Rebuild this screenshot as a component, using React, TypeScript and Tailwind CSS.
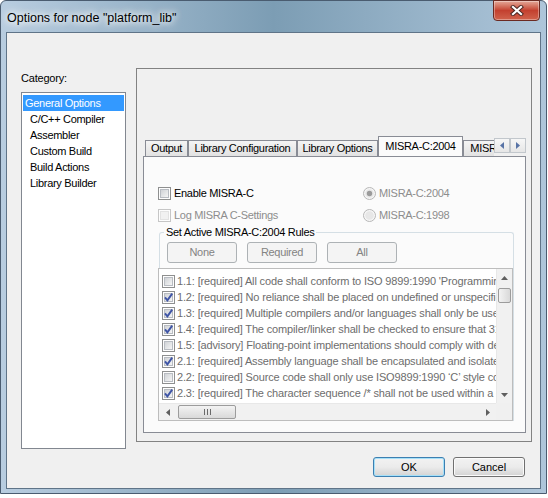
import React from "react";

const categories = ["General Options", "C/C++ Compiler", "Assembler", "Custom Build", "Build Actions", "Library Builder"];

const tabs = [
  { label: "Output", w: "w-[43px]" },
  { label: "Library Configuration", w: "w-[109px]" },
  { label: "Library Options", w: "w-[81px]" },
  { label: "MISRA-C:2004", w: "w-[85px]", active: true },
  { label: "MISRA-C:1998", w: "w-[85px]" },
];

const rules = [
  { on: false, text: "1.1: [required] All code shall conform to ISO 9899:1990 'Programming languages - C'" },
  { on: true, text: "1.2: [required] No reliance shall be placed on undefined or unspecified behaviour" },
  { on: true, text: "1.3: [required] Multiple compilers and/or languages shall only be used if there is a common interface" },
  { on: true, text: "1.4: [required] The compiler/linker shall be checked to ensure that 31 character significance" },
  { on: false, text: "1.5: [advisory] Floating-point implementations should comply with defined floating-point standard" },
  { on: true, text: "2.1: [required] Assembly language shall be encapsulated and isolated" },
  { on: false, text: "2.2: [required] Source code shall only use ISO9899:1990 ‘C’ style comments" },
  { on: true, text: "2.3: [required] The character sequence /* shall not be used within a comment" },
  { on: false, text: "2.4: [advisory] Sections of code should not be \"commented out\"" },
];

function CheckBox({ checked = false, disabled = false }: { checked?: boolean; disabled?: boolean }) {
  return (
    <svg width="13" height="13" viewBox="0 0 13 13" className="shrink-0">
      <defs>
        <linearGradient id="cbfill" x1="0" y1="0" x2="1" y2="1">
          <stop offset="0" stopColor="#cdd0d4" />
          <stop offset="1" stopColor="#f7f7f7" />
        </linearGradient>
      </defs>
      <rect x="0.5" y="0.5" width="12" height="12" fill="#fdfdfd" stroke={disabled ? "#c6c6c6" : "#8e8f8f"} />
      <rect x="2.5" y="2.5" width="8" height="8" fill={disabled ? "#f1f1f1" : "url(#cbfill)"} stroke={disabled ? "#e2e2e2" : "#b8bcc2"} />
      {checked && <path d="M3 6.3 L5.4 9.4 L10.2 2.6" fill="none" stroke="#3f55a6" strokeWidth="1.9" />}
    </svg>
  );
}

function Radio({ selected = false }: { selected?: boolean }) {
  return (
    <svg width="13" height="13" viewBox="0 0 13 13" className="shrink-0">
      <circle cx="6.5" cy="6.5" r="6" fill="#f6f6f6" stroke="#b7b7b7" />
      <circle cx="6.5" cy="6.5" r="4.3" fill="#e7e7e7" />
      {selected && <circle cx="6.5" cy="6.5" r="2.7" fill="#9b9b9b" />}
    </svg>
  );
}

function Arrow({ dir, color = "#5f5f5f" }: { dir: "up" | "down" | "left" | "right"; color?: string }) {
  const d = {
    up: "M0 4 L3.5 0 L7 4 Z",
    down: "M0 0 L7 0 L3.5 4 Z",
    left: "M4 0 L4 7 L0 3.5 Z",
    right: "M0 0 L4 3.5 L0 7 Z",
  }[dir];
  const vertical = dir === "up" || dir === "down";
  return (
    <svg width={vertical ? 7 : 4} height={vertical ? 4 : 7} viewBox={vertical ? "0 0 7 4" : "0 0 4 7"}>
      <path d={d} fill={color} />
    </svg>
  );
}

function WinButton({ children, focused = false, disabled = false, className = "" }: { children: React.ReactNode; focused?: boolean; disabled?: boolean; className?: string }) {
  if (disabled) {
    return (
      <div className={`flex items-center justify-center rounded-[3px] border border-[#adb2b5] bg-[#f4f4f4] text-[#838383] ${className}`}>
        {children}
      </div>
    );
  }
  return (
    <div
      className={`flex items-center justify-center rounded-[3px] border ${focused ? "border-[#3c7fb1] shadow-[inset_0_0_0_1px_#a6e0f8]" : "border-[#707070] shadow-[inset_0_0_0_1px_#fbfbfb]"} bg-linear-to-b from-[#f2f2f2] via-[#ebebeb] to-[#d3d3d3] text-black ${className}`}
    >
      {children}
    </div>
  );
}

export default function App() {
  return (
    <div className="w-[548px] h-[498px] bg-white font-['Liberation_Sans',Arial,sans-serif] text-[11px] text-black select-none">
      <div className="w-[547px] h-[494px] rounded-t-[6px] border border-[#4a5c70] bg-linear-to-r from-[#b8cde0] via-[#7c9db4] to-[#aec6da] flex flex-col">
        {/* title bar */}
        <div className="h-[31px] flex items-start justify-between">
          <div className="pl-[6px] pt-[10px] text-[12.5px] leading-[15px] [text-shadow:0_0_6px_#fff,0_0_10px_#fff,0_0_14px_#fff]">
            Options for node "platform_lib"
          </div>
          <div className="-mt-px mr-[6px] w-[47px] h-[21px] rounded-b-[4px] border border-[#6b2a22] bg-linear-to-b from-[#e3a899] via-[#c3402f] to-[#d0624c] flex items-center justify-center shadow-[inset_0_0_0_1px_rgba(255,255,255,0.35)]">
            <svg width="14" height="11" viewBox="0 0 14 11">
              <path d="M3 2 L11 9 M11 2 L3 9" stroke="#4e2a25" strokeWidth="4.2" strokeLinecap="square" />
              <path d="M3 2 L11 9 M11 2 L3 9" stroke="#ffffff" strokeWidth="2.2" strokeLinecap="square" />
            </svg>
          </div>
        </div>

        {/* client area */}
        <div className="flex-1 mx-[5px] mb-[4px] border border-[#5f7488] bg-[#f0f0f0] flex flex-col">
          <div className="flex items-start pt-[35px] pl-[14px]">
            <div className="w-[105px] flex flex-col">
              <div className="pt-[4px] mb-[7px] leading-[13px] tracking-[-0.2px]">Category:</div>
              <div className="h-[357px] border border-[#828790] bg-white pt-[2px] px-[1px] tracking-[-0.3px]">
                {categories.map((c, i) => (
                  <div key={c} className={`h-[16px] flex items-center ${i === 0 ? "bg-[#3399ff] text-white pl-[2px]" : "pl-[7px]"}`}>
                    {c}
                  </div>
                ))}
              </div>
            </div>

            {/* right panel */}
            <div className="ml-[10px] w-[396px] h-[374px] border border-[#828282] pl-[6px] pt-[67px]">
              <div className="w-[383px]">
                {/* tab header */}
                <div className="h-[20px] flex items-start">
                  <div className="w-[352px] h-[20px] overflow-hidden flex items-end pl-[2px]">
                    {tabs.map((t) =>
                      t.active ? (
                        <div
                          key={t.label}
                          className={`${t.w} shrink-0 h-[21px] -mb-px relative z-10 border border-b-0 border-[#898c95] bg-[#fbfbfb] flex items-start justify-center pt-[3px] leading-[13px] tracking-[-0.3px]`}
                        >
                          {t.label}
                        </div>
                      ) : (
                        <div
                          key={t.label}
                          className={`${t.w} shrink-0 h-[16px] border border-b-0 border-[#898c95] bg-linear-to-b from-[#f4f4f4] to-[#e2e2e2] flex items-center justify-center leading-[13px] tracking-[-0.3px] whitespace-nowrap`}
                        >
                          {t.label}
                        </div>
                      )
                    )}
                  </div>
                  <div className="mt-[2px] flex">
                    <div className="w-[16px] h-[15px] border border-[#c2c7cc] bg-linear-to-b from-[#f7f7f7] to-[#e6e6e6] flex items-center justify-center">
                      <Arrow dir="left" color="#5873a6" />
                    </div>
                    <div className="w-[16px] h-[15px] border border-[#c2c7cc] bg-linear-to-b from-[#f7f7f7] to-[#e6e6e6] flex items-center justify-center">
                      <Arrow dir="right" color="#5873a6" />
                    </div>
                  </div>
                </div>

                {/* tab page */}
                <div className="h-[277px] border border-[#898c95] bg-[#fbfbfb] flex flex-col pl-[14px] pt-[30px] tracking-[-0.3px]">
                  <div className="grid grid-cols-[205px_auto] gap-y-[9px]">
                    <div className="h-[13px] flex items-center gap-[3px]">
                      <CheckBox />
                      <span>Enable MISRA-C</span>
                    </div>
                    <div className="h-[13px] flex items-center gap-[3px] text-[#8d8d8d]">
                      <Radio selected />
                      <span>MISRA-C:2004</span>
                    </div>
                    <div className="h-[13px] flex items-center gap-[3px] text-[#8d8d8d]">
                      <CheckBox disabled />
                      <span>Log MISRA C-Settings</span>
                    </div>
                    <div className="h-[13px] flex items-center gap-[3px] text-[#8d8d8d]">
                      <Radio />
                      <span>MISRA-C:1998</span>
                    </div>
                  </div>

                  <fieldset className="mt-[4px] ml-[1px] w-[354px] border-t border-x border-[#d5dfe5] rounded-t-[3px]">
                    <legend className="ml-[4px] px-[2px] leading-[13px]">Set Active MISRA-C:2004 Rules</legend>
                    <div className="pt-[3px] pl-[7px] flex gap-[10px]">
                      <WinButton disabled className="w-[70px] h-[21px]">None</WinButton>
                      <WinButton disabled className="w-[70px] h-[21px]">Required</WinButton>
                      <WinButton disabled className="w-[70px] h-[21px]">All</WinButton>
                    </div>

                    {/* rule list */}
                    <div className="mt-[5px] -ml-[2px] w-[355px] h-[153px] border border-[#bdbdbd] bg-white grid grid-cols-[1fr_16px] grid-rows-[134px_1fr]">
                      <div className="overflow-hidden pt-[4px] pl-[3px] text-[#6d6d6d] tracking-[-0.15px]">
                        {rules.map((r) => (
                          <div key={r.text} className="h-[16px] flex items-center gap-[2px] whitespace-nowrap">
                            <CheckBox checked={r.on} />
                            <span>{r.text}</span>
                          </div>
                        ))}
                      </div>
                      {/* vertical scrollbar */}
                      <div className="bg-[#f1f1f1] border-l border-[#e8e8e8] flex flex-col">
                        <div className="h-[17px] flex items-center justify-center">
                          <Arrow dir="up" />
                        </div>
                        <div className="mt-[2px] mx-[1px] h-[15px] rounded-[2px] border border-[#9c9c9c] bg-linear-to-r from-[#f3f3f3] to-[#d9d9d9]" />
                        <div className="flex-1" />
                        <div className="h-[17px] flex items-center justify-center">
                          <Arrow dir="down" />
                        </div>
                      </div>
                      {/* horizontal scrollbar */}
                      <div className="bg-[#f1f1f1] border-t border-[#e8e8e8] flex items-stretch">
                        <div className="w-[17px] flex items-center justify-center">
                          <Arrow dir="left" />
                        </div>
                        <div className="my-[1px] ml-[2px] w-[58px] rounded-[2px] border border-[#9c9c9c] bg-linear-to-b from-[#f3f3f3] to-[#d9d9d9] flex items-center justify-center gap-[2px]">
                          <span className="w-px h-[6px] bg-[#6a6a6a]" />
                          <span className="w-px h-[6px] bg-[#6a6a6a]" />
                          <span className="w-px h-[6px] bg-[#6a6a6a]" />
                        </div>
                        <div className="flex-1" />
                        <div className="w-[17px] flex items-center justify-center">
                          <Arrow dir="right" />
                        </div>
                      </div>
                      <div className="bg-[#f0f0f0]" />
                    </div>
                  </fieldset>
                </div>
              </div>
            </div>
          </div>

          {/* dialog buttons */}
          <div className="mt-[8px] flex justify-end gap-[8px] pr-[15px]">
            <WinButton focused className="w-[72px] h-[20px]">OK</WinButton>
            <WinButton className="w-[72px] h-[20px]">Cancel</WinButton>
          </div>
        </div>
      </div>
    </div>
  );
}
